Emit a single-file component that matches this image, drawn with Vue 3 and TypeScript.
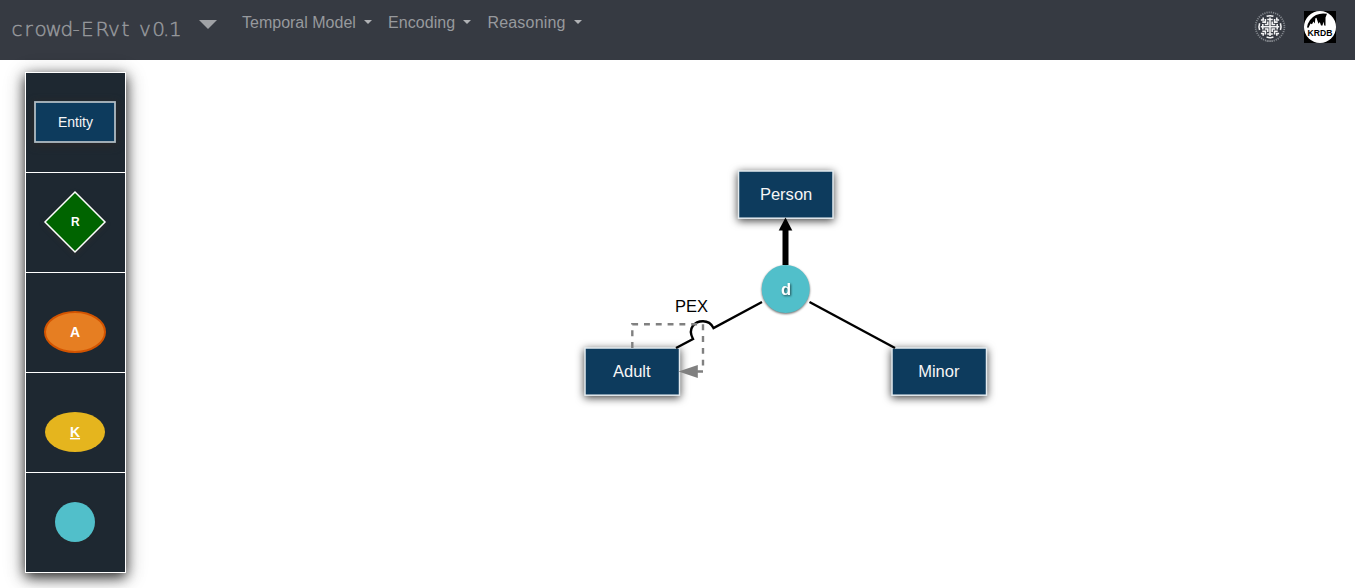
<script setup lang="ts">
interface Entity { name: string; x: number; y: number; tx: number }
const menus: string[] = ['Temporal Model', 'Encoding', 'Reasoning']
const entities: Entity[] = [
  { name: 'Person', x: 738.5, y: 171, tx: 786.1 },
  { name: 'Adult', x: 585, y: 348, tx: 631.8 },
  { name: 'Minor', x: 892, y: 348, tx: 938.8 },
]
const tools: string[] = ['entity', 'relation', 'attribute', 'key', 'constraint']
const spokes: number[] = [0, 90, 180, 270]
</script>

<template>
  <div class="page">
    <header class="bar">
      <svg class="brand" width="184" height="60" viewBox="0 0 184 60">
        <text y="35.5" x="11.5 24.5 34.5 45.5 60.5 72.5 81 95.5 108 121.5 132 139 152.2 163 169">crowd-ERvt v0.1</text>
      </svg>
      <svg class="drop" width="18" height="10" viewBox="0 0 18 10"><path d="M0 0H18L9 9Z" /></svg>
      <nav class="menus">
        <a v-for="m in menus" :key="m" class="menu">{{ m }}<i class="caret"></i></a>
      </nav>
      <div class="logos">
        <svg width="32" height="32" viewBox="0 0 32 32" fill="none">
          <circle cx="16" cy="15.7" r="14.4" class="seal-ring" />
          <g v-for="a in spokes" :key="a" :transform="`rotate(${a} 16 15.7)`" class="seal">
            <path d="M16 15.7V6.5M13.2 8.5H18.8M12.6 5.3Q16 4.1 19.4 5.3" />
            <path d="M18.2 10.5V13.5H21.2M20.6 8V11.1H23.7M22.8 6.6V8.9H25.1" />
          </g>
          <path d="M12.5 30.2H19.5" class="seal-date" />
        </svg>
        <svg width="32" height="32" viewBox="0 0 32 32">
          <rect width="32" height="32" />
          <circle cx="16" cy="16" r="16" fill="#fff" />
          <path d="M3 16.5Q4.3 8 12 4Q17 1.7 23 2.8L21.5 6.5V14.8L20.3 14.5L19.4 10.8L18.5 14.5H17L15.8 11L14.5 12.7L12.4 6.8L11.4 7.3L10.8 12.5L9.4 10.6L8 13.2L6.5 12.5L4.5 16.8Z" />
          <text x="16" y="25.3" text-anchor="middle" class="krdb">KRDB</text>
        </svg>
      </div>
    </header>

    <main class="workspace">
      <aside class="palette">
        <div v-for="tool in tools" :key="tool" class="cell">
          <svg width="100" height="99" viewBox="0 0 100 99">
            <g v-if="tool === 'entity'">
              <rect x="9" y="29" width="80" height="40" class="entity tool-entity" />
              <text x="49.5" y="54" class="entity-label">Entity</text>
            </g>
            <g v-else-if="tool === 'relation'">
              <path d="M49 19L79 49L49 79L19 49Z" class="relation" />
              <text x="49.3" y="53" class="relation-label">R</text>
            </g>
            <g v-else-if="tool === 'attribute'">
              <ellipse cx="49" cy="59" rx="30" ry="20" class="attribute" />
              <text x="49" y="64" class="attr-label">A</text>
            </g>
            <g v-else-if="tool === 'key'">
              <ellipse cx="49" cy="59" rx="30" ry="20" class="key" />
              <text x="49" y="64" class="attr-label underline">K</text>
            </g>
            <circle v-else cx="49" cy="49" r="20" class="node tool-node" />
          </svg>
        </div>
      </aside>
    </main>

    <svg class="diagram" width="1355" height="588" viewBox="0 0 1355 588">
      <g v-for="e in entities" :key="e.name">
        <rect :x="e.x" :y="e.y" width="94.5" height="47.2" class="entity" />
        <text :x="e.tx" :y="e.y + 29" class="name">{{ e.name }}</text>
      </g>
      <g class="link">
        <path d="M676 348L693 339C687 328 695 321.3 703 321.3C709 321.3 712 325 713.5 328L762 302" />
        <path d="M809.5 302L895 348" />
      </g>
      <path d="M785.5 265V229" class="isa" />
      <path d="M785.5 217.5L792.3 230.5H778.7Z" />
      <path d="M632.3 348V324.3H703V371.5H697" class="temporal" />
      <path d="M678.5 371.5L697.8 365V378Z" class="temporal-head" />
      <text x="691.5" y="312" class="pex">PEX</text>
      <circle cx="785.7" cy="289" r="24" class="node" />
      <text x="786" y="294.7" class="d-label">d</text>
    </svg>
  </div>
</template>

<style>
body { margin: 0; background: #fff; overflow: hidden; }
</style>
<style scoped>
.page { position: relative; width: 1355px; height: 588px; overflow: hidden; font-family: "Liberation Sans", Arial, sans-serif; background: #fff; }
.bar { display: flex; align-items: flex-start; height: 60px; background: #363a42; color: #97999d; }
.brand { flex: none; }
.brand text { font: 200 20px "DejaVu Sans Light", "DejaVu Sans", sans-serif; fill: #97999d; stroke: #97999d; stroke-width: .45; }
.drop { margin: 20px 0 0 15px; fill: #a0a2a6; flex: none; }
.menus { display: flex; gap: 16px; margin: 11px 0 0 25px; font-size: 16px; line-height: 24px; }
.menu { display: flex; align-items: center; white-space: nowrap; }
.menu:nth-child(2) { letter-spacing: .07px; }
.menu:nth-child(3) { letter-spacing: .2px; }
.caret { border: 4.8px solid transparent; border-top-color: #b0b2b5; border-bottom: 0; margin: -3px 0 0 8.16px; }
.logos { display: flex; gap: 18px; margin: 11px 19px 0 auto; }
.seal { stroke: #f2f2f3; stroke-width: 1.55; }
.seal-ring { stroke: #81858b; stroke-width: 1.8; stroke-dasharray: 1.2 1; }
.seal-date { stroke: #8d9095; stroke-width: 1.3; stroke-dasharray: 1 .8; }
.krdb { font: bold 8.6px "Liberation Sans", Arial, sans-serif; }
.workspace { padding: 12px 25px; }
.palette { width: 99px; border: 1px solid #fff; background: #1e2831; box-shadow: 0 4px 12px rgba(0,0,0,.75), 0 4px 20px rgba(0,0,0,.3); }
.cell { height: 99px; border-bottom: 1px solid #fff; }
.cell:last-child { border-bottom: 0; }
.cell svg { display: block; overflow: visible; }
.entity { fill: #0d3b5d; stroke: #e4ebef; stroke-width: 1.5; filter: drop-shadow(0 2px 4px rgba(0,0,0,.75)); }
.tool-entity { stroke: #b0bcc3; stroke-width: 1.8; filter: drop-shadow(0 2px 4px rgba(45,40,38,.9)); }
text { text-anchor: middle; }
.brand text { text-anchor: start; }
.entity-label { font-size: 14px; fill: #f6f6f6; }
.relation { fill: #006400; stroke: #fff; stroke-width: 1.5; filter: drop-shadow(0 2px 2px #292c2d); }
.relation-label { font-size: 12px; font-weight: bold; fill: #fff; }
.attribute { fill: #e67e22; stroke: #d35400; stroke-width: 2; }
.key { fill: #e5b51e; }
.attr-label { font-size: 14px; font-weight: bold; fill: #fff; }
.underline { text-decoration: underline; }
.node { fill: #51bfca; filter: drop-shadow(0 1px 1px rgba(0,0,0,.6)); }
.tool-node { filter: drop-shadow(0 1px 1px rgba(40,40,40,.5)); }
.diagram { position: absolute; left: 0; top: 0; pointer-events: none; }
.name { font-size: 16.55px; fill: #f6f6f6; }
.link { fill: none; stroke: #000; stroke-width: 2.4; }
.isa { stroke: #000; stroke-width: 6; }
.temporal { fill: none; stroke: #808080; stroke-width: 2.4; stroke-dasharray: 5.9 5.9; }
.temporal-head { fill: #808080; }
.pex { font-size: 16.5px; fill: #000; }
.d-label { font-size: 16.5px; font-weight: bold; fill: #fff; filter: drop-shadow(1px 1px 1px rgba(0,0,0,.6)); }
</style>
